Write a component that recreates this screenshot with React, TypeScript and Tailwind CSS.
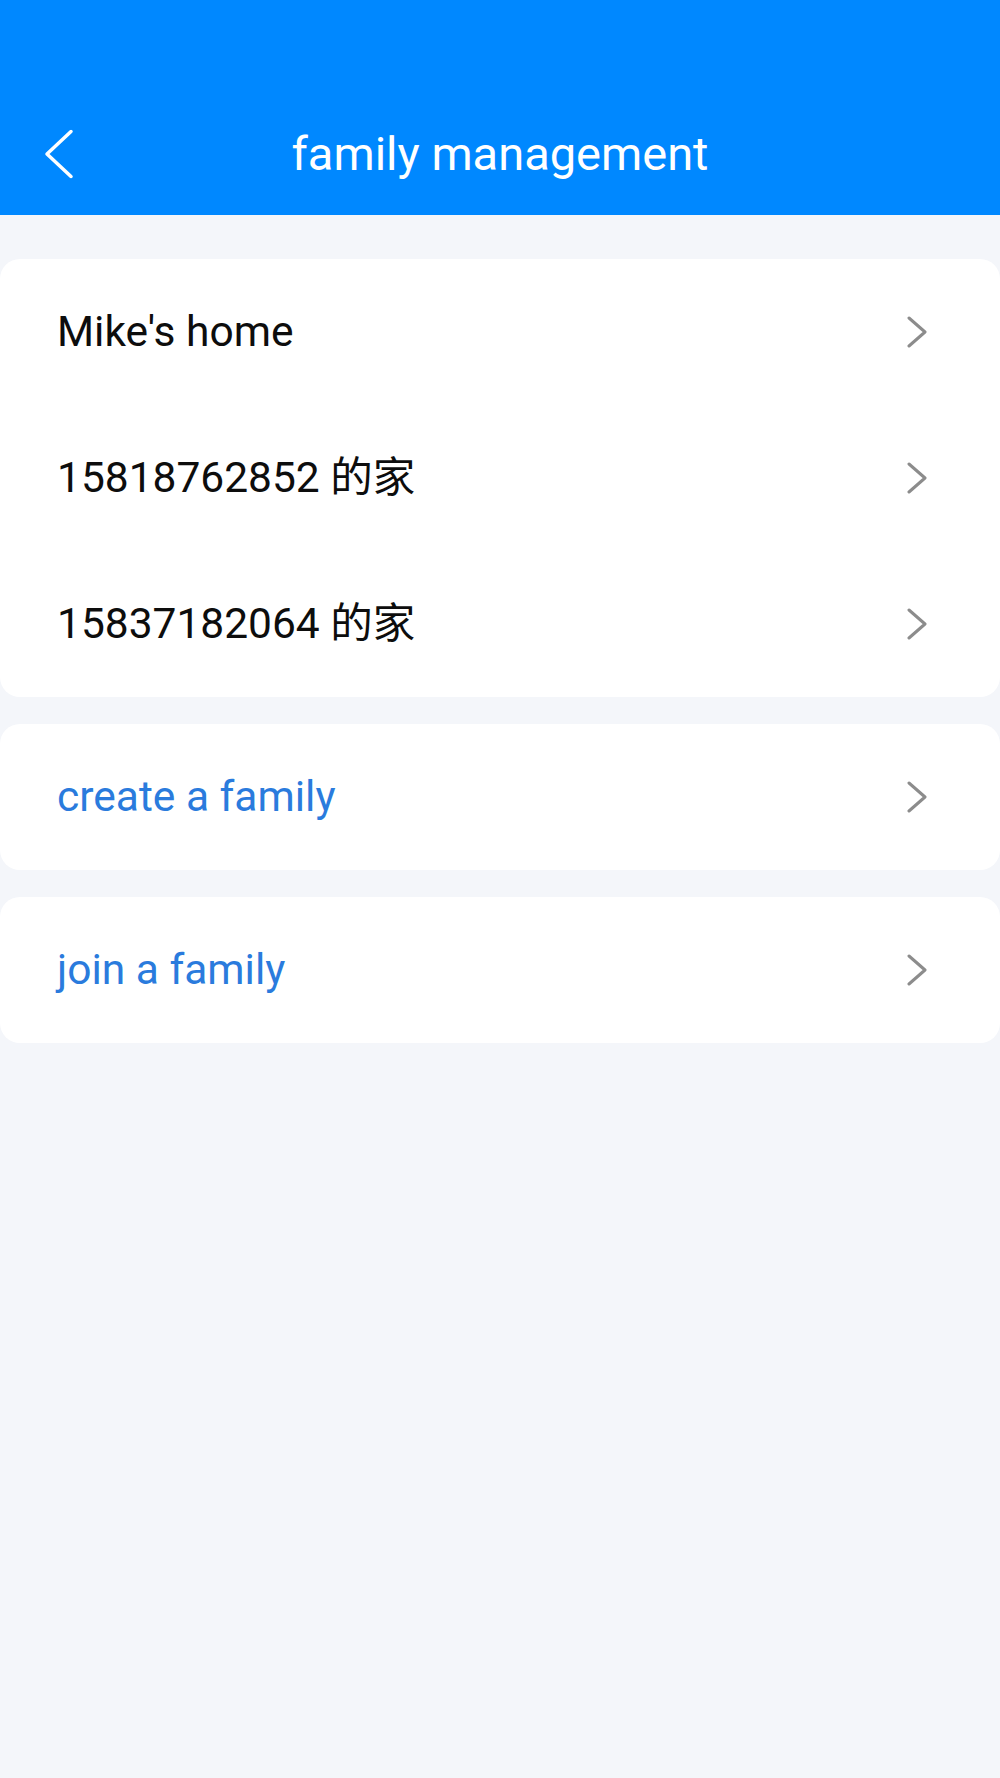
const families = ["Mike's home", "15818762852 的家", "15837182064 的家"]

const actions = ["create a family", "join a family"]

function Chevron() {
  return (
    <svg width="20" height="32" viewBox="0 0 20 32" fill="none" className="shrink-0">
      <path d="M2 2 L18 16 L2 30" stroke="#8c8c8c" strokeWidth="3" strokeLinecap="round" strokeLinejoin="round" />
    </svg>
  )
}

function Row({ label, blue }: { label: string; blue?: boolean }) {
  return (
    <div className="flex h-[146px] items-center justify-between pl-[57px] pr-[73px]">
      <span className={`text-[42.5px] leading-none ${blue ? "text-[#2a7bdd]" : "text-[#0d0d0d]"}`}>{label}</span>
      <Chevron />
    </div>
  )
}

export default function App() {
  return (
    <div
      className="min-h-[1778px] w-full bg-[#f4f6fa]"
      style={{ fontFamily: 'Roboto, "Noto Sans CJK SC", sans-serif' }}
    >
      {/* Header */}
      <header className="flex h-[215px] flex-col justify-end bg-[#0088ff]">
        <div className="relative flex h-[123px] items-center justify-center">
          <button className="absolute left-[44px] top-1/2 -translate-y-1/2">
            <svg width="30" height="49" viewBox="0 0 30 49" fill="none">
              <path d="M27 2 L3 24.5 L27 47" stroke="white" strokeWidth="3.5" strokeLinecap="round" strokeLinejoin="round" />
            </svg>
          </button>
          <h1 className="text-[47px] leading-none text-white">family management</h1>
        </div>
      </header>

      {/* Family list */}
      <div className="flex flex-col gap-[27px] pt-[44px]">
        <div className="rounded-[20px] bg-white">
          {families.map((name) => (
            <Row key={name} label={name} />
          ))}
        </div>

        {actions.map((a) => (
          <div key={a} className="rounded-[20px] bg-white">
            <Row label={a} blue />
          </div>
        ))}
      </div>
    </div>
  )
}
